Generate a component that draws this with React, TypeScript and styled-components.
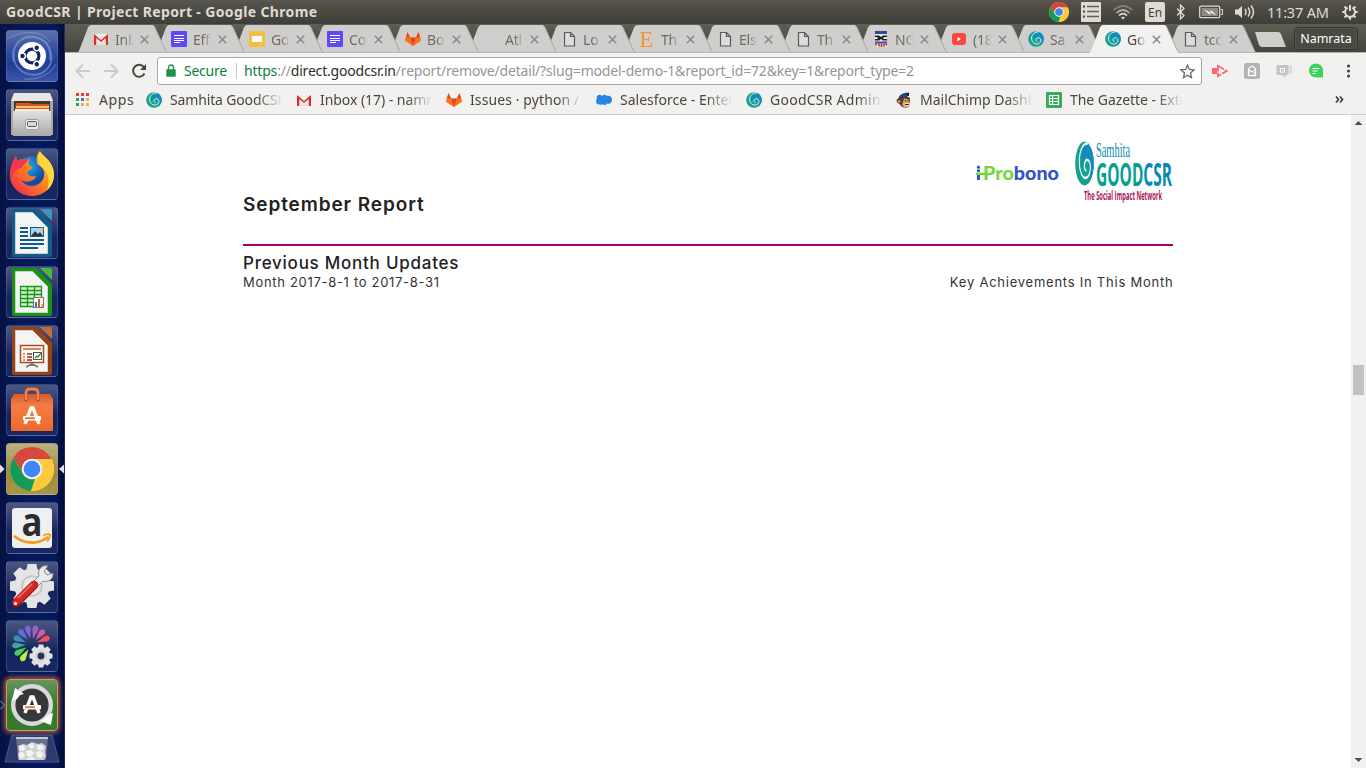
import React from "react";
import styled, { createGlobalStyle } from "styled-components";

const GlobalStyle = createGlobalStyle`
  * { box-sizing: border-box; }
  html, body { margin: 0; padding: 0; overflow: hidden; }
  svg { display: block; flex: none; }
`;

const ui = `"Noto Sans", "Open Sans", sans-serif`;

const Desktop = styled.div`
  width: 1366px;
  height: 768px;
  display: flex;
  flex-direction: column;
  overflow: hidden;
  background: #fff;
  font-family: ${ui};
`;

/* ---------- top panel ---------- */
const Panel = styled.header`
  height: 24px;
  flex: none;
  display: flex;
  align-items: center;
  justify-content: space-between;
  padding: 0 8px 0 6px;
  color: #dfdbd2;
  background: linear-gradient(#5b584e 0, #54524a 3px, #3e3d38 100%);
`;
const WindowTitle = styled.div`
  font-size: 14px;
  font-weight: 700;
  letter-spacing: 0.36px;
  line-height: 24px;
  white-space: nowrap;
`;
const Tray = styled.div`
  display: flex;
  align-items: center;
  gap: 12px;
  height: 24px;
`;
const LanguageBadge = styled.div`
  width: 20px;
  height: 20px;
  border-radius: 2px;
  background: #dfdbd2;
  color: #403f3a;
  font-size: 12px;
  line-height: 21px;
  text-align: center;
`;
const Clock = styled.div`
  width: 63px;
  font-size: 14.5px;
  letter-spacing: -0.2px;
  line-height: 24px;
  white-space: nowrap;
`;

/* ---------- launcher ---------- */
const Workspace = styled.div`
  flex: 1;
  display: flex;
  min-height: 0;
`;
const Launcher = styled.nav`
  width: 65px;
  flex: none;
  display: flex;
  flex-direction: column;
  gap: 7px;
  padding: 6px 0 0 6px;
  background: linear-gradient(90deg, #061244, #041a5c 40%, #04195a 85%, #020c3a);
  border-right: 1px solid #1d2c66;
  overflow: hidden;
`;
const Tile = styled.div<{ $bg?: string; $glow?: boolean }>`
  position: relative;
  width: 52px;
  height: 52px;
  flex: none;
  border-radius: 4px;
  border: 1px solid ${(p) => (p.$glow ? "#d99a52" : "rgba(160,170,210,.24)")};
  background: ${(p) => p.$bg || "linear-gradient(#4b5783 0, #2a3769 38%, #14245c 60%, #172863 100%)"};
  box-shadow: ${(p) => (p.$glow ? "0 0 4px 2px rgba(210,110,60,.75)" : "none")};
  & > svg { margin: -1px; }
`;
const Pip = styled.span<{ $side: "left" | "right" }>`
  position: absolute;
  top: 19px;
  ${(p) => (p.$side === "left" ? "left: -7px;" : "right: -7px;")}
`;

/* ---------- browser ---------- */
const Browser = styled.main`
  flex: 1;
  min-width: 0;
  display: flex;
  flex-direction: column;
`;
const TabStrip = styled.div`
  height: 29px;
  flex: none;
  display: flex;
  padding: 1px 8px 0 12px;
  background: linear-gradient(#5d5f52, #45443e);
  border-bottom: 1px solid #b5b3b0;
`;
const TabBox = styled.div<{ $z: number; $overlap: number }>`
  position: relative;
  z-index: ${(p) => p.$z};
  width: 91px;
  height: 28px;
  flex: none;
  margin-right: -${(p) => p.$overlap}px;
  display: flex;
  align-items: center;
  padding: 0 0 0 16px;
`;
const TabShape = styled.svg`
  position: absolute;
  left: 0;
  top: 0;
`;
const TabIcon = styled.span`
  position: relative;
  width: 16px;
  height: 16px;
  flex: none;
`;
const TabTitle = styled.span<{ $active?: boolean }>`
  position: relative;
  width: 19px;
  margin-left: 6px;
  overflow: hidden;
  white-space: nowrap;
  font-size: 14px;
  letter-spacing: -0.2px;
  line-height: 27px;
  color: ${(p) => (p.$active ? "#4b4740" : "#6f6c68")};
  mask-image: linear-gradient(90deg, #000 50%, transparent 100%);
`;
const TabClose = styled.svg`
  position: relative;
  margin-left: 6px;
`;
const NewTab = styled.svg`
  margin: 7px 0 0 11px;
`;
const Profile = styled.div`
  margin: 2px 0 0 auto;
  width: 64px;
  height: 23px;
  border: 1px solid #35342f;
  border-radius: 4px;
  background: #4a4942;
  box-shadow: inset 0 0 0 1px #56554d;
  color: #fff;
  font-size: 12.5px;
  line-height: 21px;
  text-align: center;
`;
const Toolbar = styled.div`
  height: 34px;
  flex: none;
  display: flex;
  align-items: center;
  padding: 2px 10px 0 10px;
  background: #f2f1f0;
`;
const NavIcons = styled.div`
  display: flex;
  gap: 12px;
  width: 82px;
`;
const Omnibox = styled.div`
  width: 1045px;
  height: 28px;
  border: 1px solid #aaa7a3;
  border-radius: 3px;
  background: #fff;
  display: flex;
  align-items: center;
  padding: 0 6px 0 8px;
  font-size: 14px;
  line-height: 26px;
  white-space: nowrap;
`;
const Secure = styled.span`
  width: 45px;
  margin-left: 8px;
  color: #0b8043;
  letter-spacing: -0.25px;
`;
const Divider = styled.span`
  width: 1px;
  height: 16px;
  margin: 0 7px 0 7px;
  background: #c8c6c4;
`;
const Url = styled.span`
  flex: 1;
  color: #979593;
  letter-spacing: -0.19px;
`;
const Scheme = styled.span` color: #0b8043; `;
const Host = styled.span` color: #2f2d2a; `;
const Extensions = styled.div`
  display: flex;
  align-items: center;
  gap: 16px;
  margin-left: 10px;
`;
const Bookmarks = styled.div`
  height: 28px;
  flex: none;
  display: flex;
  align-items: center;
  padding: 0 22px 2px 11px;
  background: #f2f1f0;
  border-bottom: 1px solid #cfcdca;
`;
const Bookmark = styled.div<{ $w: number }>`
  width: ${(p) => p.$w}px;
  display: flex;
  gap: 8px;
  align-items: center;
`;
const BookmarkText = styled.span<{ $ls: number; $fade: boolean }>`
  width: ${(p) => (p.$fade ? "114px" : "auto")};
  overflow: hidden;
  white-space: nowrap;
  font-size: 14px;
  line-height: 24px;
  letter-spacing: ${(p) => p.$ls}px;
  color: #4a4640;
  mask-image: ${(p) => (p.$fade ? "linear-gradient(90deg, #000 76%, transparent 99%)" : "none")};
`;
const More = styled.svg`
  margin-left: auto;
`;

/* ---------- page ---------- */
const Viewport = styled.div`
  flex: 1;
  min-height: 0;
  display: flex;
  background: #fff;
`;
const Page = styled.div`
  flex: 1;
  padding-left: 178px;
  font-family: Inter, sans-serif;
  color: #222;
`;
const Report = styled.article` width: 930px; `;
const ReportHeader = styled.div`
  height: 131px;
  border-bottom: 2px solid #a8005f;
  display: flex;
  justify-content: space-between;
`;
const ReportTitle = styled.h1`
  margin: 78px 0 0;
  font-size: 19px;
  line-height: 24px;
  font-weight: 600;
  letter-spacing: 0.9px;
`;
const Logos = styled.div`
  display: flex;
  gap: 15px;
  padding-top: 24px;
`;
const SectionTitle = styled.h2`
  margin: 7px 0 0;
  font-size: 17px;
  line-height: 20px;
  font-weight: 500;
  letter-spacing: 0.75px;
`;
const SectionRow = styled.div`
  display: flex;
  justify-content: space-between;
  font-size: 13px;
  line-height: 18px;
  letter-spacing: 0.69px;
  color: #333;
`;
const Achievements = styled.span`
  letter-spacing: 0.76px;
  margin-right: -0.4px;
`;
const Scrollbar = styled.div`
  width: 15px;
  display: flex;
  flex-direction: column;
  align-items: center;
  background: #f1f1f1;
`;
const Thumb = styled.div`
  width: 11px;
  height: 30px;
  margin: 235px 0 auto;
  background: #c1c1c1;
`;

/* ---------- icons ---------- */
const Gmail = () => (
  <svg width="16" height="16" viewBox="0 0 16 16">
    <path d="M1 3h14v11H1z" fill="#f1efec" />
    <path d="M1 14V3l7 6 7-6v11h-2.4V7L8 11 3.400 7v7z" fill="#d93025" />
    <path d="M3.400 14V9L8 12l4.600-3v5z" fill="#e4e2df" />
  </svg>
);
const DocIcon = () => (
  <svg width="16" height="16" viewBox="0 0 16 16">
    <rect width="16" height="16" rx="1" fill="#5f48f5" />
    <path d="M3 4.500h10M3 7.500h10M3 9.500h10M3 11.500h6" stroke="#fff" />
  </svg>
);
const SlidesIcon = () => (
  <svg width="16" height="16" viewBox="0 0 16 16">
    <rect width="16" height="16" rx="1" fill="#f4bf3a" />
    <rect x="3" y="5" width="10" height="6" fill="#fff" />
  </svg>
);
const Gitlab = () => (
  <svg width="16" height="16" viewBox="0 0 16 16">
    <path d="M0 9.500 2.500 1l2.600 5.500h5.800L13.500 1 16 9.500 8 15z" fill="#fca326" />
    <path d="M.8 6.500h4.300L8 15 0 9.500zM15.200 6.500h-4.300L8 15l8-5.500z" fill="#fc6d26" />
    <path d="M5.100 6.500h5.800L8 15zM.8 6.500 2.500 1l2.600 5.500zM15.200 6.500 13.500 1l-2.600 5.500z" fill="#e24329" />
  </svg>
);
const FileIcon = () => (
  <svg width="16" height="16" viewBox="0 0 16 16">
    <path d="M3.500 1.500h6l4 4v9.500h-10zM9.500 1.500v4h4" fill="#dedcda" stroke="#5a5957" strokeWidth="1.200" />
  </svg>
);
const Etsy = () => (
  <svg width="16" height="16" viewBox="0 0 16 16">
    <text x="0.500" y="15.500" fontFamily="Liberation Serif, serif" fontSize="23" fill="#f5922f" textLength="14" lengthAdjust="spacingAndGlyphs">E</text>
  </svg>
);
const Crest = () => (
  <svg width="16" height="16" viewBox="0 0 16 16">
    <path d="M2 0h12v16H2z" fill="#e9e7ea" />
    <path d="M2 0h12v3H2z" fill="#2f4b8e" />
    <path d="M2 4.500h4l2 1.500 2-1.500h4V6h-3l-1 2h4v1.500h-4L8 8l-2 1.500H2V8h3L4 6H2z" fill="#222" />
    <path d="M2 10.500h12v2H2z" fill="#38549b" />
    <path d="M3 12.500v2M6 12.500v3M8.500 12.500v3.500M11 12.500v3M13.300 12.500v2" stroke="#a92432" strokeWidth="1.500" />
  </svg>
);
const Youtube = () => (
  <svg width="16" height="16" viewBox="0 0 16 16">
    <rect x="1" y="2" width="14" height="12" rx="3" fill="#fb4744" />
    <path d="M6.500 5.800v4.400L10 8z" fill="#fff" />
  </svg>
);
const Swirl = ({ w = 16, h = 16 }: { w?: number; h?: number }) => (
  <svg width={w} height={h} viewBox="0 0 16 16" preserveAspectRatio="none">
    <circle cx="8" cy="8" r="7.800" fill="#15a190" />
    <path d="M5.200 6.500C5 3 8 1 11 1.300 14 2 15.900 5 15.800 8c-.1 3-1.800 5.500-4 6.700 1.700-2.200 2-5 .7-6.700-1.600-2-4.700-2-6.200.3z" fill="#128cbc" />
    <path d="M10.500.9C6.500.8 3.700 3.500 3.600 7c-.1 3.600 2.500 6.300 5.400 6.100 2.800-.2 4.300-2.300 3.900-4.300C12.400 6.400 9 5.900 8.100 8c-.5 1.200 0 2.300 1.100 2.500" fill="none" stroke="#eff7f6" strokeWidth=".9" strokeLinecap="round" />
  </svg>
);
const Salesforce = () => (
  <svg width="16" height="16" viewBox="0 0 16 16">
    <path d="M3.500 12.500C-.5 12.500-.5 8 1 7-.5 3 4 1.500 6 4c2-2.500 4.500-1 5 0 3-1 5 1 5 4 0 3-3 4.500-5 3.500-1.500 2-3.500 2-4.500.5-1 1-2 1-3 .5z" fill="#2386e0" />
  </svg>
);
const Mailchimp = () => (
  <svg width="16" height="16" viewBox="0 0 16 16">
    <path d="M2.500 6C3 3 6 2 9 3l5 3-.5 8-3 1.800L6 15l-2.500-3L1 10.500.5 8z" fill="#5b3b24" />
    <path d="M8 6.500l5 1v2.500l1.500 2-2 3-4 .5L6 13z" fill="#d9a872" />
    <path d="M2 8.500q2-1 2.500 1L3.500 11 1.500 10z" fill="#d9a872" />
    <path d="M8.500 11h5.500v3H9z" fill="#f2d3a8" />
    <path d="M3 5C5 1.500 8 .5 12.500.8L13 4C10 3.500 7 4.500 4 7z" fill="#21439b" />
    <path d="M9.500 2 13 .6V4z" fill="#15192c" />
    <path d="M9.500 8v1.500M12 8v1.500M9 12.500h4" stroke="#3a2417" />
  </svg>
);
const SheetIcon = () => (
  <svg width="16" height="16" viewBox="0 0 16 16">
    <rect width="16" height="16" rx="1" fill="#36ab5c" />
    <path d="M3.500 3.500h9v9h-9zM3.500 6.500h9M3.500 9.500h9M6.500 3.500v9" stroke="#fff" fill="none" strokeWidth="1.200" />
  </svg>
);
const AppsGrid = () => {
  const colors = ["#ea3b33", "#ea3b33", "#ea3b33", "#2ba35c", "#4a66e8", "#f5b13c", "#2ba35c", "#f5b13c", "#f5b13c"];
  return (
    <svg width="15" height="13" viewBox="0 0 15 13">
      {colors.map((c, i) => (
        <rect key={i} x={(i % 3) * 5} y={Math.floor(i / 3) * 5} width="3" height="3" fill={c} />
      ))}
    </svg>
  );
};
const ChromeLogo = ({ size }: { size: number }) => (
  <svg width={size} height={size} viewBox="0 0 44 44">
    <circle cx="22" cy="22" r="22" fill="#fccb3c" />
    <path d="M22 0a22 22 0 0 1 19.500 12H22a10 10 0 0 0-8.700 15L3.200 10.700A22 22 0 0 1 22 0z" fill="#d6473d" />
    <path d="M3.200 10.700 13.300 27A10 10 0 0 0 25 31.600L21 44A22 22 0 0 1 3.200 10.700z" fill="#149b58" />
    <path d="M41.500 12H22l7 4 1.500 11L21 44A22 22 0 0 0 41.500 12z" fill="#fccb3c" />
    <circle cx="22" cy="22" r="10.300" fill="#f2f2f2" />
    <circle cx="22" cy="22" r="8.300" fill="#4285f4" />
  </svg>
);
const Gear = ({ cx, cy, r, fill, hole, teeth = 8 }: { cx: number; cy: number; r: number; fill: string; hole: string; teeth?: number }) => (
  <g transform={`translate(${cx} ${cy})`}>
    {Array.from({ length: teeth }, (_, i) => (
      <path key={i} transform={`rotate(${(i * 360) / teeth})`} d={`M${-r * 0.26} ${-r * 0.7}L${-r * 0.2} ${-r}H${r * 0.2}L${r * 0.26} ${-r * 0.7}z`} fill={fill} />
    ))}
    <circle r={r * 0.8} fill={fill} />
    <circle r={r * 0.45} fill="none" stroke="#c4c4c4" strokeWidth={r * 0.08} />
    <circle r={r * 0.3} fill={hole} />
  </g>
);

const UbuntuArt = () => (
  <svg width="52" height="52" viewBox="0 0 52 52">
    <g fill="none" stroke="#8fa5df" opacity=".6">
      <path d="M8 32C4 16 16 3 32 8c10 3 14 13 12 22" strokeWidth="2" />
      <path d="M44 20c6 14-6 28-22 24C12 41 7 33 8 24" strokeWidth="1.500" />
      <path d="M1 9C16 0 36 0 44 12M50 34C44 46 30 50 18 49" />
    </g>
    <circle cx="26" cy="26" r="14" fill="#fff" />
    <circle cx="26" cy="26" r="6.900" fill="none" stroke="#14265c" strokeWidth="3.200" />
    {[60, 180, 300].map((a) => (
      <g key={a} transform={`rotate(${a} 26 26)`}>
        <circle cx="35" cy="26" r="3.300" fill="#fff" />
        <circle cx="35.500" cy="26" r="2.200" fill="#14265c" />
      </g>
    ))}
  </svg>
);
const FilesArt = () => (
  <svg width="52" height="52" viewBox="0 0 52 52">
    <defs><linearGradient id="cab" x2="0" y2="1"><stop stopColor="#e0e0e0" /><stop offset="1" stopColor="#a9a9a9" /></linearGradient></defs>
    <path d="M8 4h36l3 8v34H5V12z" fill="#a8a8a8" />
    <path d="M8 4h36l3 8H5z" fill="#e6e6e6" />
    <path d="M8 12h36v11H8z" fill="#43372f" />
    <path d="M10 14h14l2 1h17v6H9z" fill="#d9571f" />
    <path d="M10 17h33v2H10z" fill="#f6bd77" /><path d="M9 20h34v2H9z" fill="#fff0d7" />
    <path d="M7 22h38v25H7z" fill="url(#cab)" />
    <rect x="19.500" y="30.500" width="13" height="10" rx="2" fill="#eee" stroke="#9a9a9a" />
    <rect x="21.500" y="32.500" width="9" height="5" rx="1" fill="#d8d8d8" stroke="#555" />
  </svg>
);
const FirefoxArt = () => (
  <svg width="52" height="52" viewBox="0 0 52 52">
    <defs>
      <linearGradient id="ff" x1="1" x2="0" y2="1"><stop stopColor="#ffe14a" /><stop offset=".45" stopColor="#ff8a1c" /><stop offset="1" stopColor="#ee1d55" /></linearGradient>
      <radialGradient id="ffb" cx=".4" cy=".3"><stop stopColor="#19a9f0" /><stop offset="1" stopColor="#144a9f" /></radialGradient>
    </defs>
    <circle cx="26" cy="25" r="17" fill="url(#ffb)" />
    <path d="M34 3c1 5 14 9 14 24 0 12-10 21-22 21S4 39 4 27c0-7 2-11 6-19l1 5c2-1 4-2 7-1l6-2c-1 3-2 5-1 7l4 3-5 3c-1 4 2 6 8 5-2 6-10 7-15 4 4 6 13 8 19 3 6-5 5-13 1-16l-4-3c-1-7 0-10 3-13z" fill="url(#ff)" />
    <path d="M34 3c1 5 14 9 14 24 0 6-3 12-7 15 3-8 2-16-3-21-5-4-8-10-4-18z" fill="#ffd83d" />
    <path d="M10 8c-6 8-7 18-4 24 0-7 3-11 9-12l9-10-6 2c-3-1-5 0-7 1z" fill="#f3364f" />
  </svg>
);
const OfficeArt = ({ c, light, kind }: { c: string; light: string; kind: "writer" | "calc" | "impress" }) => (
  <svg width="52" height="52" viewBox="0 0 52 52">
    <path d="M8 2h22l16 16v30q0 2-2 2H8q-2 0-2-2V4q0-2 2-2z" fill={c} />
    <path d="M34 2h10q2 0 2 2v10z" fill={light} />
    <path d="M9.500 5.500h17l15 15v26h-32z" fill="#f4f4f4" stroke="#cfcfcf" />
    {kind === "writer" && (
      <g>
        <path d="M14 21h8M14 25h8M14 29h8M14 33h24M14 37h24M14 41h18" stroke="#0f5b88" strokeWidth="2" />
        <rect x="24.500" y="20.500" width="13" height="9" fill="#a6d7f5" stroke="#0f5b88" />
        <path d="m25 29 4-5 3 3 2-2 3 4z" fill="#333" /><circle cx="36" cy="22" r="1.500" fill="#f3c929" />
      </g>
    )}
    {kind === "calc" && (
      <g>
        <path d="M14.500 20.500h21v20h-21zM14.500 24.500h21M14.500 28.500h21M14.500 32.500h21M14.500 36.500h21M21.500 20v20M28.500 20v20" fill="#d7f5ca" stroke="#159415" strokeWidth="1.300" />
        <rect x="27.500" y="31.500" width="10" height="10" fill="#fff" stroke="#777" />
        <path d="M29 36h2v5h-2z" fill="#2b7ac4" /><path d="M32 33h2v8h-2z" fill="#e1541d" /><path d="M35 38h2v3h-2z" fill="#f2b91d" />
      </g>
    )}
    {kind === "impress" && (
      <g>
        <path d="M26 38v3M26 39l-6 3M26 39l6 3" stroke="#777" strokeWidth="1.800" />
        <rect x="14.500" y="20.500" width="23" height="17" fill="#fff" stroke="#b34a14" strokeWidth="1.500" />
        <path d="M17 24h18" stroke="#d9652c" strokeWidth="1.600" />
        <path d="M17 29h2M17 32h2M17 35h2" stroke="#d9652c" strokeWidth="1.500" />
        <path d="M21 29h5M21 32h5M21 35h5" stroke="#8e3208" strokeWidth="1.500" />
        <rect x="27.500" y="27.500" width="8" height="7" fill="#fff" stroke="#555" />
        <path d="m29 33 2-2 1 1 3-4" stroke="#2c9931" fill="none" strokeWidth="1.300" />
      </g>
    )}
  </svg>
);
const SoftwareArt = () => (
  <svg width="52" height="52" viewBox="0 0 52 52">
    <defs><linearGradient id="bag" x2="0" y2="1"><stop stopColor="#d9582d" /><stop offset=".3" stopColor="#f47c42" /><stop offset="1" stopColor="#ee6a2c" /></linearGradient></defs>
    <path d="M8 10h36l3 5v32H5V15z" fill="url(#bag)" />
    <path d="M20 17V9q0-4 4-4h4q4 0 4 4v8" fill="none" stroke="#b94625" strokeWidth="3.400" />
    <path d="M20 16V9q0-4 4-4h4q4 0 4 4v7" fill="none" stroke="#ee845a" strokeWidth="2.400" />
    <path d="m19 40 6-16h2l6 16" fill="none" stroke="#fff" strokeWidth="3.500" />
    <rect x="17" y="32" width="18" height="4.500" rx="1" fill="#fff" /><path d="M19 34.200h10" stroke="#f07030" strokeWidth="1.800" />
  </svg>
);
const ChromeArt = () => (
  <svg width="52" height="52" viewBox="0 0 52 52"><g transform="translate(4 4)"><ChromeLogo size={44} /></g></svg>
);
const AmazonArt = () => (
  <svg width="52" height="52" viewBox="0 0 52 52">
    <rect x="6" y="6" width="40" height="40" rx="3" fill="#f0f0f0" />
    <text x="15.500" y="34" fontFamily="Open Sans, sans-serif" fontWeight="700" fontSize="40" fill="#2c2c2c" textLength="21" lengthAdjust="spacingAndGlyphs">a</text>
    <path d="M8 34c10 8 24 9 34 1" fill="none" stroke="#f79b1c" strokeWidth="2.800" />
    <path d="M37 33.500q5-2 7-1 0 4-3 7" fill="none" stroke="#f79b1c" strokeWidth="1.800" />
  </svg>
);
const SettingsArt = () => (
  <svg width="52" height="52" viewBox="0 0 52 52">
    <Gear cx={26} cy={25} r={22} fill="#e4e4e4" hole="#eee" />
    <path d="M27 21 33 15C31 9 36 3 42 5l-4 5 3 4 6-2c1 6-5 10-10 8l-6 6z" fill="#ebebeb" stroke="#777" strokeWidth=".8" />
    <path d="M10 42 28 24" stroke="#8f0e10" strokeWidth="8.500" strokeLinecap="round" />
    <path d="M10 41.500 28 23.500" stroke="#da2525" strokeWidth="7" strokeLinecap="round" />
    <path d="M12 37 26 23" stroke="#f07b72" strokeWidth="1.300" /><circle cx="9.500" cy="42.500" r="1.500" fill="#fff" />
  </svg>
);
const petals = ["#b8f23c", "#4ad153", "#39a8a4", "#3a8fb8", "#5b6fd6", "#7d66cf", "#a45fc0", "#d758a8", "#f54f5c"];
const CompizArt = () => (
  <svg width="52" height="52" viewBox="0 0 52 52">
    {petals.map((c, i) => (
      <path key={i} transform={`translate(25.500 24.500) rotate(${-148 + i * 27})`} d="M0-6-3-15.500q0-3.500 3-4 3 .5 3 4z" fill={c} />
    ))}
    <Gear cx={35} cy={36} r={11.500} fill="#e2e2e2" hole="#25315f" />
  </svg>
);
const UpdaterArt = () => (
  <svg width="52" height="52" viewBox="0 0 52 52">
    <circle cx="26" cy="26" r="17" fill="#383838" />
    <circle cx="26" cy="26" r="18.800" fill="none" stroke="#d9d9d9" strokeWidth="4.400" />
    <path d="M6 22 9 9l9 6-4 1-3 4z" fill="#fff" /><path d="m47 34-2 12-11-4 4-2 4-4z" fill="#fff" />
    <path d="m19 34 6-16h2l6 16" fill="none" stroke="#fff" strokeWidth="3.500" />
    <rect x="17" y="26" width="18" height="4.500" rx="1" fill="#fff" /><path d="M19 28.200h10" stroke="#f07030" strokeWidth="1.800" />
  </svg>
);
const Trash = styled.svg` margin: -4px 0 0 -2px; `;
const TrashArt = () => (
  <Trash width="56" height="30" viewBox="0 0 56 30">
    <path d="M8 1h40l7 27H1z" fill="#2c3a6e" stroke="#4c5883" />
    <path d="M12 3h32l-2 23H14z" fill="#67708c" />
    <path d="M12 3h32v2H12z" fill="#c3c9cf" />
    <path d="m14 12 5-2 4 1 5-3 6 2 4-1 4 3-1 6 1 4-2 4H15l-1-5 1-4z" fill="#cfd1d3" />
    <g fill="#f3f3f3">
      <path d="m15 12 4-1 3 3-3 3-4-1zM24 11l4-2 3 4-4 2zM33 11l5 0 2 3-4 3-3-2zM15 19l4-1 2 4-3 3-3-2zM22 17l5-1 3 3-3 4-4-1zM32 18l4-1 4 3-3 4-4-1zM23 24l6-1 2 3h-8z" />
    </g>
  </Trash>
);

const launcherItems: { art: React.ReactNode; bg?: string; glow?: boolean; pips?: string }[] = [
  { art: <UbuntuArt />, bg: "linear-gradient(#5e71a9 0, #294a9e 45%, #1d3d97 65%, #3a56a8 100%)" },
  { art: <FilesArt /> },
  { art: <FirefoxArt /> },
  { art: <OfficeArt c="#0f5f8d" light="#3e93c4" kind="writer" /> },
  { art: <OfficeArt c="#189312" light="#4cb83f" kind="calc" /> },
  { art: <OfficeArt c="#9c4110" light="#cc6a35" kind="impress" /> },
  { art: <SoftwareArt /> },
  { art: <ChromeArt />, bg: "linear-gradient(#bdb083, #a08c3e 55%, #a99546)", pips: "both" },
  { art: <AmazonArt /> },
  { art: <SettingsArt /> },
  { art: <CompizArt /> },
  { art: <UpdaterArt />, bg: "linear-gradient(#6c9165, #317a2c 50%, #357b31)", glow: true, pips: "hollow" },
];

const tabs: { icon: React.ReactNode; title: string }[] = [
  { icon: <Gmail />, title: "Inbox" },
  { icon: <DocIcon />, title: "Effo" },
  { icon: <SlidesIcon />, title: "Go" },
  { icon: <DocIcon />, title: "Co" },
  { icon: <Gitlab />, title: "Bo" },
  { icon: null, title: "Atl" },
  { icon: <FileIcon />, title: "Lo" },
  { icon: <Etsy />, title: "Th" },
  { icon: <FileIcon />, title: "Else" },
  { icon: <FileIcon />, title: "Th" },
  { icon: <Crest />, title: "NG" },
  { icon: <Youtube />, title: "(18)" },
  { icon: <Swirl />, title: "Sa" },
  { icon: <Swirl />, title: "Go" },
  { icon: <FileIcon />, title: "tcc" },
];
const ACTIVE = 13;

const bookmarks: { icon: React.ReactNode; text: string; ls: number }[] = [
  { icon: <Swirl />, text: "Samhita GoodCSR", ls: -0.15 },
  { icon: <Gmail />, text: "Inbox (17) - namrata", ls: -0.05 },
  { icon: <Gitlab />, text: "Issues · python / m", ls: 0.1 },
  { icon: <Salesforce />, text: "Salesforce - Enterp", ls: 0 },
  { icon: <Swirl />, text: "GoodCSR Admin", ls: 0.25 },
  { icon: <Mailchimp />, text: "MailChimp Dashb", ls: 0 },
  { icon: <SheetIcon />, text: "The Gazette - Extr", ls: -0.05 },
];

function TopPanel() {
  return (
    <Panel>
      <WindowTitle>GoodCSR | Project Report - Google Chrome</WindowTitle>
      <Tray>
        <ChromeLogo size={20} />
        <svg width="20" height="20" viewBox="0 0 20 20">
          <rect width="20" height="20" rx="1" fill="#dfdbd2" />
          <path d="M6 4.500h12M6 9.500h12M6 14.500h12" stroke="#625f58" strokeWidth="1.600" />
          <path d="M2 4.500h2M2 9.500h2M2 14.500h2" stroke="#47443f" strokeWidth="2" />
        </svg>
        <svg width="20" height="16" viewBox="0 0 20 16" fill="none" strokeWidth="1.700">
          <path d="M1 6q9-8 18 0" stroke="#827f77" /><path d="M3.500 9q6.500-6 13 0" stroke="#b5b1a9" />
          <path d="M6 11.500q4-4 8 0" stroke="#dfdbd2" /><path d="m8 13.500 2 2 2-2q-2-1.500-4 0z" fill="#dfdbd2" />
        </svg>
        <LanguageBadge>En</LanguageBadge>
        <svg width="10" height="16" viewBox="0 0 10 16"><path d="m0 4.500 7 7-3.500 3.500v-14L7 4.500l-7 7" fill="none" stroke="#dfdbd2" strokeWidth="1.300" /></svg>
        <svg width="24" height="14" viewBox="0 0 24 14">
          <rect x=".7" y="1.200" width="20" height="11.500" rx="1.500" fill="none" stroke="#dfdbd2" strokeWidth="1.300" />
          <rect x="2.500" y="3" width="16.500" height="8" fill="#8d8a82" /><path d="M22 4.500h1.500v5H22" fill="none" stroke="#dfdbd2" />
          <path d="m5 4.500 6.500 3V5l6 5-6.500-2.500V10z" fill="#fff" />
        </svg>
        <svg width="20" height="16" viewBox="0 0 20 16" fill="none" stroke="#dfdbd2" strokeWidth="1.500">
          <path d="M0 5.500h3L7 2v12l-4-3.500H0z" fill="#dfdbd2" stroke="none" />
          <path d="M10 5q2 3 0 6M13 3.500q3.500 4.500 0 9M16 1.500q5 6.500 0 13" />
        </svg>
        <Clock>11:37 AM</Clock>
        <svg width="16" height="16" viewBox="0 0 16 16" fill="none" stroke="#dfdbd2" strokeWidth="2">
          <path d="M5.700 3.600a5 5 0 1 0 4.600 0M8 1v6" />
          <path d="M.3 8h2.500M13.200 8h2.500M8 13v2.700M2.500 2.500l1.800 1.800M13.500 2.500l-1.800 1.800M2.500 13.500l1.800-1.800M13.500 13.500l-1.800-1.800" />
        </svg>
      </Tray>
    </Panel>
  );
}

function Tab({ icon, title, index }: { icon: React.ReactNode; title: string; index: number }) {
  const active = index === ACTIVE;
  return (
    <TabBox $z={active ? 40 : 30 - index} $overlap={index < 11 ? 13 : 14}>
      <TabShape width="91" height="28" viewBox="0 0 91 28">
        <path d="M.5 28Q1.500 27 2.500 24.500L11 2.500Q12 0 14 0H75.500Q77 0 78 2.500L88 24.500Q89 27 90.500 28z" fill={active ? "#f2f1f0" : "#d0cecc"} />
        <path d="M77.500 1.500 88 24.500Q89 27 90.500 28" fill="none" stroke="#aaa8a4" strokeWidth="1" />
        {!active && <path d="M0 27.500h91" stroke="#bab8b4" />}
      </TabShape>
      <TabIcon>{icon}</TabIcon>
      <TabTitle $active={active}>{title}</TabTitle>
      <TabClose width="9" height="9" viewBox="0 0 9 9"><path d="m.8.8 7.400 7.400M8.200.8.8 8.200" stroke="#8b8986" strokeWidth="1.500" /></TabClose>
    </TabBox>
  );
}

function BrowserChrome() {
  return (
    <>
      <TabStrip>
        {tabs.map((t, i) => <Tab key={i} index={i} {...t} />)}
        <NewTab width="33" height="16" viewBox="0 0 33 16"><path d="M1 0h23q2 0 3 2l5 13H8q-2 0-3-2z" fill="#d0cecc" /></NewTab>
        <Profile>Namrata</Profile>
      </TabStrip>
      <Toolbar>
        <NavIcons>
          <svg width="16" height="16" viewBox="0 0 16 16" fill="none" stroke="#cccac8" strokeWidth="2"><path d="M15 8H2M8 1.500 1.500 8 8 14.500" /></svg>
          <svg width="16" height="16" viewBox="0 0 16 16" fill="none" stroke="#cccac8" strokeWidth="2"><path d="M1 8h13M8 1.500 14.500 8 8 14.500" /></svg>
          <svg width="16" height="16" viewBox="0 0 16 16"><path d="M13.500 10.500A6 6 0 1 1 12.800 4" fill="none" stroke="#484744" strokeWidth="2" /><path d="M15 1v6H9z" fill="#484744" /></svg>
        </NavIcons>
        <Omnibox>
          <svg width="10" height="14" viewBox="0 0 10 14"><path d="M1 6h8v6H1z" fill="#239149" stroke="#239149" strokeWidth="1.500" strokeLinejoin="round" /><path d="M2.500 6V3.500a2.500 2.500 0 0 1 5 0V6" fill="none" stroke="#239149" strokeWidth="1.400" /></svg>
          <Secure>Secure</Secure>
          <Divider />
          <Url><Scheme>https</Scheme>://<Host>direct.goodcsr.in</Host>/report/remove/detail/?slug=model-demo-1&amp;report_id=72&amp;key=1&amp;report_type=2</Url>
          <svg width="15" height="15" viewBox="0 0 15 15"><path d="m7.500 1.200 1.800 4.300 4.700.4-3.500 3.100 1 4.600-4-2.400-4 2.400 1-4.600L1 5.900l4.700-.4z" fill="none" stroke="#6e6c69" strokeWidth="1.300" /></svg>
        </Omnibox>
        <Extensions>
          <svg width="16" height="16" viewBox="0 0 16 16"><path d="M0 5h5v6H0z" fill="#ff6469" /><path d="M6 2.800 14.500 8 6 13.200z" fill="#fff" stroke="#ff6469" strokeWidth="1.800" strokeDasharray="7 1.200" /></svg>
          <svg width="16" height="16" viewBox="0 0 16 16"><rect width="16" height="16" rx="2.500" fill="#b5b3b1" /><path d="M4.500 12.500V6Q8 .8 11.500 6v6.500z" fill="none" stroke="#fff" strokeWidth="1.300" /><path d="M5 6.500 8 9l3-2.500M5 9.500 8 8l3 3" stroke="#fff" fill="none" /></svg>
          <svg width="16" height="16" viewBox="0 0 16 16"><path d="M1.500 2h10q1 0 1 1v8q0 1-1 1H9.500v3L6 12H1.500q-1 0-1-1V3q0-1 1-1z" fill="#c7c5c3" /><path d="M14 2v9M15.700 3v7" stroke="#cfcdcb" /><rect x="4.500" y="5.500" width="4" height="3.500" fill="none" stroke="#fff" /></svg>
          <svg width="16" height="16" viewBox="0 0 16 16"><circle cx="8" cy="7.500" r="7" fill="#3dd45d" /><path d="M9 9h6v5.500H9z" fill="#3dd45d" /><path d="M4.500 5.500h7M4.500 8h5M4.500 10.500h3" stroke="#fff" strokeWidth="1.200" /></svg>
          <svg width="16" height="16" viewBox="0 0 16 16" fill="#484744"><circle cx="8.500" cy="3" r="1.600" /><circle cx="8.500" cy="8" r="1.600" /><circle cx="8.500" cy="13" r="1.600" /></svg>
        </Extensions>
      </Toolbar>
      <Bookmarks>
        <Bookmark $w={70}><AppsGrid /><BookmarkText $ls={0.6} $fade={false}>Apps</BookmarkText></Bookmark>
        {bookmarks.map((b) => (
          <Bookmark key={b.text} $w={150}>{b.icon}<BookmarkText $ls={b.ls} $fade>{b.text}</BookmarkText></Bookmark>
        ))}
        <More width="9" height="7" viewBox="0 0 9 7"><path d="m1 .5 2.500 3L1 6.500M5 .5l2.500 3-2.500 3" fill="none" stroke="#45423e" strokeWidth="1.700" /></More>
      </Bookmarks>
    </>
  );
}

const ProbonoLogo = () => (
  <svg width="85" height="24" viewBox="0 0 85 24">
    <text x="8" y="16" fontFamily="Lato, sans-serif" fontWeight="900" fontSize="19.500" fill="#75d63a" textLength="76" lengthAdjust="spacingAndGlyphs">Pro<tspan fill="#3155c4">bono</tspan></text>
    <path d="M3.500 5.500v2.500M3.500 10.500v5.500" stroke="#3155c4" strokeWidth="3" />
    <path d="M1 9.800h10" stroke="#75d63a" strokeWidth="2.400" />
    <circle cx="3.500" cy="3.200" r="1.600" fill="#3155c4" />
  </svg>
);
const ProbonoSlot = styled.div` padding-top: 25px; `;
const GoodCsrLogo = () => (
  <svg width="98" height="66" viewBox="0 0 98 66">
    <g transform="translate(0 2)"><Swirl w={19} h={45} /></g>
    <text x="21" y="17.500" fontFamily="Liberation Serif, serif" fontSize="21" fill="#0b8fb5" textLength="34" lengthAdjust="spacingAndGlyphs">Samhita</text>
    <g fontFamily="Open Sans, sans-serif">
      <text transform="translate(21 46.500) scale(1 1.420)" fontWeight="700" fontSize="23" fill="#06a08f" textLength="76" lengthAdjust="spacingAndGlyphs">GOOD<tspan fill="#0989b6">CSR</tspan></text>
      <text x="9" y="61" fontSize="12" fontWeight="700" fill="#ad1457" textLength="78" lengthAdjust="spacingAndGlyphs">The Social Impact Network</text>
    </g>
  </svg>
);

export default function App() {
  return (
    <Desktop>
      <GlobalStyle />
      <TopPanel />
      <Workspace>
        <Launcher>
          {launcherItems.map((it, i) => (
            <Tile key={i} $bg={it.bg} $glow={it.glow}>
              {it.art}
              {it.pips && (
                <Pip $side="left">
                  <svg width="6" height="12" viewBox="0 0 6 12"><path d="M0 1.500 4.500 6 0 10.500" fill={it.pips === "both" ? "#e3e3e3" : "none"} stroke={it.pips === "both" ? "none" : "#6a9bd6"} /></svg>
                </Pip>
              )}
              {it.pips === "both" && (
                <Pip $side="right"><svg width="6" height="12" viewBox="0 0 6 12"><path d="M6 1.500 1 6l5 4.500z" fill="#e3e3e3" /></svg></Pip>
              )}
            </Tile>
          ))}
          <TrashArt />
        </Launcher>
        <Browser>
          <BrowserChrome />
          <Viewport>
            <Page>
              <Report>
                <ReportHeader>
                  <ReportTitle>September Report</ReportTitle>
                  <Logos>
                    <ProbonoSlot><ProbonoLogo /></ProbonoSlot>
                    <GoodCsrLogo />
                  </Logos>
                </ReportHeader>
                <SectionTitle>Previous Month Updates</SectionTitle>
                <SectionRow><span>Month 2017-8-1 to 2017-8-31</span><Achievements>Key Achievements In This Month</Achievements></SectionRow>
              </Report>
            </Page>
            <Scrollbar>
              <svg width="15" height="15" viewBox="0 0 15 15"><path d="m3.500 10 4-4 4 4z" fill="#505050" /></svg>
              <Thumb />
              <svg width="15" height="15" viewBox="0 0 15 15"><path d="m3.500 5 4 4 4-4z" fill="#505050" /></svg>
            </Scrollbar>
          </Viewport>
        </Browser>
      </Workspace>
    </Desktop>
  );
}
